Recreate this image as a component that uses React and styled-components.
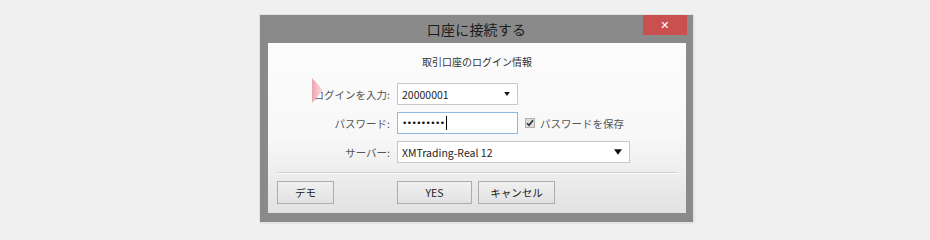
import React from 'react';
import styled, { createGlobalStyle } from 'styled-components';

const GlobalStyle = createGlobalStyle`
  body {
    margin: 0;
    font-family: "Noto Sans CJK JP", "Noto Sans", sans-serif;
  }
`;

const Page = styled.div`
  width: 930px;
  height: 240px;
  box-sizing: border-box;
  padding: 15px 0 0 260px;
  background: #f0f0f0;
`;

const Window = styled.div`
  width: 433px;
  display: flex;
  flex-direction: column;
  background: #8a8a8a;
  box-shadow: 0 0 0 1px #e2e2e2, 1px 1px 2px rgba(0, 0, 0, 0.15);
`;

const TitleBar = styled.div`
  position: relative;
  height: 28px;
  display: flex;
  align-items: center;
  justify-content: center;
  font-size: 14px;
  color: #1c1c1c;
  letter-spacing: 0.2px;
`;

const CloseButton = styled.div`
  position: absolute;
  top: 0;
  right: 6px;
  width: 44px;
  height: 20px;
  background: #c9504f;
  color: #fff;
  font-family: "DejaVu Sans", sans-serif;
  font-weight: bold;
  font-size: 11px;
  display: flex;
  align-items: center;
  justify-content: center;
`;

const Body = styled.div`
  position: relative;
  margin: 0 7px 9px 8px;
  height: 170px;
  display: flex;
  flex-direction: column;
  background: linear-gradient(#fcfcfc 0%, #f8f8f8 55%, #e2e2e2 100%);
`;

const Subtitle = styled.div`
  margin-top: 12px;
  height: 14px;
  line-height: 14px;
  text-align: center;
  font-size: 10px;
  color: #333;
`;

const Form = styled.div`
  margin-top: 14px;
  display: grid;
  grid-template-columns: 122px 121px auto;
  grid-auto-rows: 22px;
  column-gap: 7px;
  row-gap: 7px;
`;

const Label = styled.label`
  display: flex;
  align-items: center;
  justify-content: flex-end;
  font-size: 10.5px;
  color: #555;
`;

const Field = styled.div`
  grid-column: ${(p) => (p.$wide ? '2 / 4' : 'auto')};
  width: ${(p) => (p.$wide ? '233px' : 'auto')};
  box-sizing: border-box;
  display: flex;
  align-items: center;
  justify-content: space-between;
  padding: 0 7px 0 4px;
  background: #fff;
  border: 1px solid ${(p) => (p.$focused ? '#8fb9e4' : '#c8c8c8')};
  font-size: 10.5px;
  color: #1e1e1e;
`;

const Dots = styled.span`
  display: flex;
  align-items: center;
  font-family: "DejaVu Sans", sans-serif;
  font-size: 9px;
  letter-spacing: -0.6px;
  color: #111;
`;

const Caret = styled.span`
  display: inline-block;
  width: 1px;
  height: 14px;
  margin-left: 2px;
  background: #000;
`;

const Remember = styled.div`
  display: flex;
  align-items: center;
  gap: 5px;
  font-size: 10.5px;
  color: #555;
`;

const CheckBox = styled.span`
  width: 10px;
  height: 10px;
  box-sizing: border-box;
  border: 1px solid #b0b0b0;
  background: #dcdcdc;
  display: flex;
  align-items: center;
  justify-content: center;
`;

const Footer = styled.div`
  margin-top: 9px;
  padding: 0 9px;
  display: flex;
  flex-direction: column;
`;

const Separator = styled.div`
  height: 1px;
  background: #d2d2d2;
  box-shadow: 0 1px 0 #fafafa;
`;

const ButtonRow = styled.div`
  margin-top: 8px;
  display: flex;
  gap: 6px;
`;

const Button = styled.button`
  width: ${(p) => p.$w}px;
  height: 23px;
  margin-left: ${(p) => p.$gapLeft || 0}px;
  padding: 0;
  box-sizing: border-box;
  border: 1px solid #acacac;
  background: linear-gradient(#f0f0f0, #e2e2e2);
  font-family: "Noto Sans CJK JP", sans-serif;
  font-size: 10.5px;
  color: #222;
`;

const Wedge = styled.svg`
  position: absolute;
  left: 44px;
  top: 35px;
`;

const Arrow = ({ size = 5 }) => (
  <svg width={size + 2} height={size} viewBox="0 0 7 5">
    <path d="M0 0 H7 L3.5 5 Z" fill="#111" />
  </svg>
);

export default function App() {
  return (
    <Page>
      <GlobalStyle />
      <Window>
        <TitleBar>
          口座に接続する
          <CloseButton>✕</CloseButton>
        </TitleBar>
        <Body>
          <Wedge width="12" height="26" viewBox="0 0 12 26">
            <defs>
              <linearGradient id="pink" x1="0" x2="1" y1="0" y2="0">
                <stop offset="0" stopColor="#eea3ae" />
                <stop offset="1" stopColor="#f9e0e4" />
              </linearGradient>
            </defs>
            <path d="M0 0 L11 12 L0 25 Z" fill="url(#pink)" />
          </Wedge>
          <Subtitle>取引口座のログイン情報</Subtitle>
          <Form>
            <Label>ログインを入力:</Label>
            <Field>
              20000001
              <Arrow size={4} />
            </Field>
            <div />
            <Label>パスワード:</Label>
            <Field $focused>
              <Dots>
                •••••••••
                <Caret />
              </Dots>
            </Field>
            <Remember>
              <CheckBox>
                <svg width="8" height="8" viewBox="0 0 8 8">
                  <path d="M1 4.2 L3 6.3 L7 1.2" stroke="#333" strokeWidth="1.6" fill="none" />
                </svg>
              </CheckBox>
              パスワードを保存
            </Remember>
            <Label>サーバー:</Label>
            <Field $wide>
              XMTrading-Real 12
              <Arrow size={6} />
            </Field>
          </Form>
          <Footer>
            <Separator />
            <ButtonRow>
              <Button $w={57}>デモ</Button>
              <Button $w={75} $gapLeft={57}>YES</Button>
              <Button $w={77}>キャンセル</Button>
            </ButtonRow>
          </Footer>
        </Body>
      </Window>
    </Page>
  );
}
